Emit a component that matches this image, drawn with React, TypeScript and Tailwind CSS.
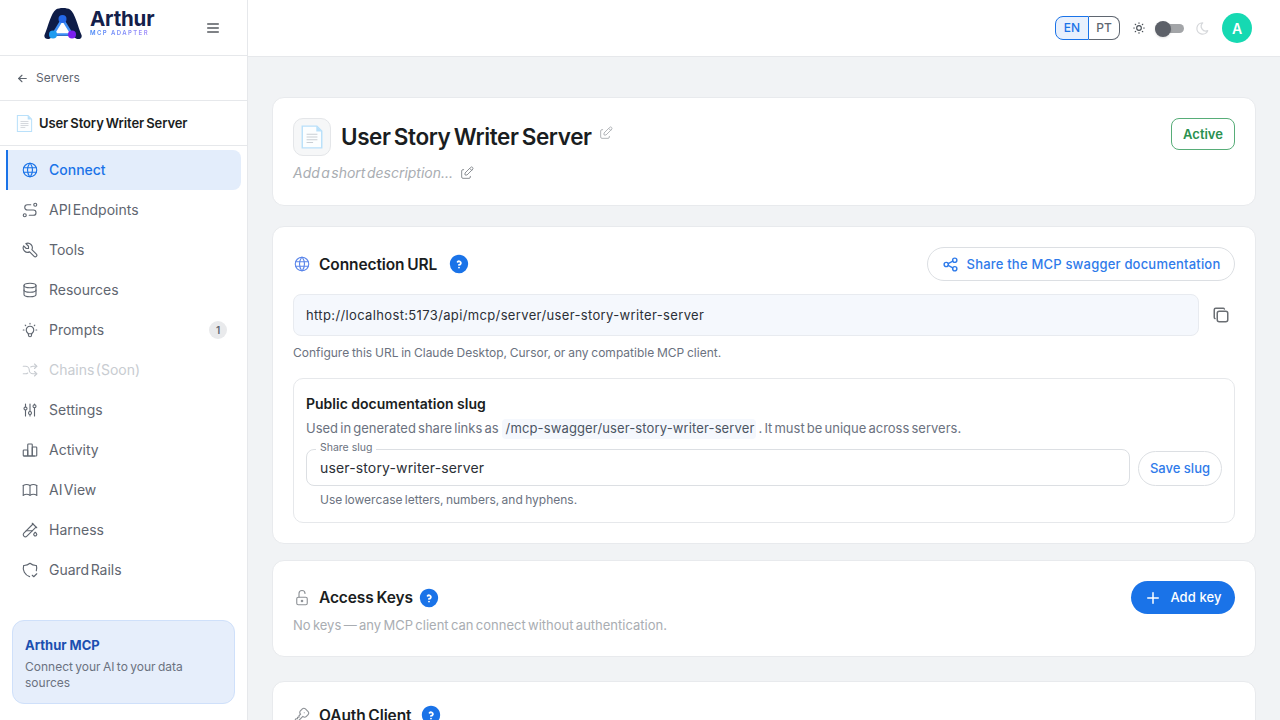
import React from 'react';
import {
  TbAdjustments,
  TbArrowLeft,
  TbArrowsShuffle,
  TbBook,
  TbBulb,
  TbChartBar,
  TbCopy,
  TbDatabase,
  TbEdit,
  TbHelpCircleFilled,
  TbKey,
  TbLockOpen,
  TbMenu2,
  TbMoon,
  TbPlus,
  TbRoute,
  TbShare,
  TbShieldCheck,
  TbSun,
  TbTestPipe,
  TbTool,
  TbWorld,
} from 'react-icons/tb';

const navItems = [
  { label: 'Connect', icon: TbWorld, active: true },
  { label: 'API Endpoints', icon: TbRoute },
  { label: 'Tools', icon: TbTool },
  { label: 'Resources', icon: TbDatabase },
  { label: 'Prompts', icon: TbBulb, badge: '1' },
  { label: 'Chains (Soon)', icon: TbArrowsShuffle, disabled: true },
  { label: 'Settings', icon: TbAdjustments },
  { label: 'Activity', icon: TbChartBar },
  { label: 'AI View', icon: TbBook },
  { label: 'Harness', icon: TbTestPipe },
  { label: 'Guard Rails', icon: TbShieldCheck },
];

function Logo() {
  return (
    <svg width="38" height="34" viewBox="0 0 38 34" className="mb-[7px]">
      <path d="M0.500 28C4 20 7 6 12 2.500c3-2 11-2 14 0C31 6 34 20 37.500 28c1.200 3.500-3 5-5.500 3.500L28 29H10l-4 2.500C3.500 33-.500 31.500.500 28z" fill="#0e1c47" />
      <path d="M18.500 12 9 27.500h19z" fill="#ffffff" stroke="#3f8ff5" strokeWidth="2.400" strokeLinejoin="round" />
      <circle cx="18.500" cy="12" r="4" fill="#2468e8" />
      <circle cx="9" cy="27.500" r="4" fill="#1d9bf0" />
      <circle cx="28" cy="27.500" r="4" fill="#7a1ff0" />
    </svg>
  );
}

function DocIcon({ size }: { size: number }) {
  return (
    <svg width={size} height={size} viewBox="0 0 24 24">
      <path d="M3 2h13.500L21 6.500V22H3z" fill="#fcfeff" stroke="#b9e0fa" strokeWidth="1.300" />
      <path d="M16 2v5h5z" fill="#b9e0fa" />
      <path d="M7 9.500h10M7 12h10M7 14.500h10M7 17h6" stroke="#c9ced4" strokeWidth="1" />
    </svg>
  );
}

function Help() {
  return <TbHelpCircleFilled size={22} className="text-[#1a73e8]" />;
}

function Sidebar() {
  return (
    <aside className="flex w-[248px] shrink-0 flex-col border-r border-[#e6e8eb] bg-white">
      <div className="flex h-[56px] shrink-0 items-center border-b border-[#e6e8eb] pl-[44px] pr-[26px]">
        <Logo />
        <div className="mb-[10px] ml-[8px] flex flex-col">
          <span className="text-[20.500px] leading-[20px] font-bold tracking-[-0.2px] text-[#14204a]">Arthur</span>
          <span className="bg-gradient-to-r from-[#3b82f6] to-[#a78bfa] bg-clip-text text-[6px] leading-[8px] font-semibold tracking-[1.400px] text-transparent">
            MCP ADAPTER
          </span>
        </div>
        <TbMenu2 size={16} className="ml-auto text-[#55595f]" />
      </div>
      <div className="flex h-[45px] shrink-0 items-center gap-[7px] border-b border-[#e6e8eb] pl-[16px] text-[12px] text-[#5f6670]">
        <TbArrowLeft size={13} />
        <span>Servers</span>
      </div>
      <div className="flex h-[45px] shrink-0 items-center gap-[5px] border-b border-[#e6e8eb] pl-[15px] text-[13px] font-semibold tracking-[-0.1px] text-[#1a1d21] [word-spacing:-1px]">
        <DocIcon size={19} />
        <span className="pt-[1px]">User Story Writer Server</span>
      </div>
      <nav className="flex flex-col pt-[4px] pr-[6px] pl-[6px]">
        {navItems.map((item) => {
          const Icon = item.icon;
          return (
            <div
              key={item.label}
              className={
                item.active
                  ? 'flex h-[40px] items-center gap-[10px] rounded-r-[8px] border-l-2 border-[#1a73e8] bg-[#e3edfb] pl-[13px] text-[14px] font-medium text-[#1a73e8]'
                  : item.disabled
                    ? 'flex h-[40px] items-center gap-[10px] pl-[15px] text-[14px] text-[#c8ccd1] [word-spacing:-2.500px]'
                    : 'flex h-[40px] items-center gap-[10px] pl-[15px] text-[14px] text-[#5f6670] [word-spacing:-2.500px]'
              }
            >
              <Icon size={18} strokeWidth={1.5} className="shrink-0" />
              <span className="mb-[2px]">{item.label}</span>
              {item.badge && (
                <span className="mr-[14px] ml-auto flex h-[18px] w-[18px] items-center justify-center rounded-full bg-[#e9eaec] text-[10px] font-semibold text-[#5f6670]">
                  {item.badge}
                </span>
              )}
            </div>
          );
        })}
      </nav>
      <div className="mx-[12px] mt-auto mb-[16px] h-[84px] rounded-[12px] border border-[#cfe0fa] bg-[#e6eefb] px-[12px] pt-[15px]">
        <div className="text-[13px] leading-[18px] font-bold text-[#1b4fb0]">Arthur MCP</div>
        <div className="mt-[5px] text-[12px] leading-[16px] text-[#6b7280] [word-spacing:-1px]">Connect your AI to your data sources</div>
      </div>
    </aside>
  );
}

function Header() {
  return (
    <header className="flex h-[57px] shrink-0 items-center justify-end border-b border-[#e6e8eb] bg-white pr-[28px]">
      <div className="flex h-[24px] text-[12px] font-medium">
        <span className="flex w-[34px] items-center justify-center rounded-l-[8px] border border-[#1a73e8] bg-[#e8f0fd] text-[#1a73e8]">EN</span>
        <span className="flex w-[31px] items-center justify-center rounded-r-[8px] border border-l-0 border-[#5f6670] text-[#5f6670]">PT</span>
      </div>
      <TbSun size={14} className="ml-[12px] text-[#4b5158]" />
      <div className="relative ml-[9px] h-[9px] w-[29px] rounded-full bg-[#a3a5a8]">
        <span className="absolute top-[-3px] left-0 h-[16px] w-[16px] rounded-full bg-[#5c6068] shadow-sm" />
      </div>
      <TbMoon size={15} className="ml-[11px] text-[#d6d8db]" />
      <div className="ml-[12px] flex h-[30px] w-[30px] items-center justify-center rounded-full bg-[#16d9b2] text-[14px] font-semibold text-white">A</div>
    </header>
  );
}

function Card({ className, children }: { className: string; children: React.ReactNode }) {
  return <section className={`shrink-0 rounded-[12px] border border-[#e8eaed] bg-white ${className}`}>{children}</section>;
}

export default function App() {
  return (
    <div className="flex h-screen overflow-hidden bg-[#f1f3f5] font-['Inter',sans-serif]">
      <Sidebar />
      <div className="flex min-w-0 flex-1 flex-col">
        <Header />
        <main className="flex flex-1 flex-col overflow-hidden pt-[40px] pr-[24px] pl-[24px]">
          <Card className="flex h-[109px] items-start justify-between px-[20px] pt-[20px]">
            <div>
              <div className="flex items-center gap-[10px]">
                <div className="flex h-[38px] w-[38px] items-center justify-center rounded-[10px] border border-[#e4e6e9] bg-[#f6f7f8]">
                  <DocIcon size={26} />
                </div>
                <h1 className="text-[22.500px] leading-[38px] font-semibold tracking-[-0.4px] text-[#1a1d21] [word-spacing:-2px]">User Story Writer Server</h1>
                <TbEdit size={16} strokeWidth={1.5} className="mb-[8px] -ml-[4px] text-[#b3b6ba]" />
              </div>
              <div className="mt-[6px] flex items-center gap-[6px] text-[14px] leading-[22px] text-[#a9adb2] italic [word-spacing:-2.500px]">
                <span>Add a short description...</span>
                <TbEdit size={16} strokeWidth={1.5} className="text-[#8d9196]" />
              </div>
            </div>
            <span className="flex h-[32px] w-[64px] items-center justify-center rounded-[8px] border border-[#57ad78] pt-[1px] text-[13px] font-semibold text-[#2a9150]">Active</span>
          </Card>

          <Card className="mt-[20px] h-[318px] px-[20px] pt-[20px]">
            <div className="flex h-[34px] items-center">
              <TbWorld size={18} strokeWidth={1.5} className="text-[#5b86ea]" />
              <h2 className="ml-[8px] pt-[1px] text-[15.500px] font-semibold tracking-[-0.1px] text-[#1a1d21] [word-spacing:-1px]">Connection URL</h2>
              <span className="ml-[11px]"><Help /></span>
              <button className="ml-auto flex h-[34px] w-[308px] items-center justify-center gap-[8px] rounded-full border border-[#dcdfe3] text-[13px] font-medium tracking-[0.2px] text-[#2f7bea]">
                <TbShare size={17} />
                <span className="pt-[1px]">Share the MCP swagger documentation</span>
              </button>
            </div>
            <div className="mt-[13px] flex items-center">
              <div className="flex h-[42px] flex-1 items-center rounded-[8px] border border-[#e8ebf0] bg-[#f5f8fd] px-[12px] pt-[1px] text-[13px] tracking-[0.36px] text-[#2b2f36]">
                http://localhost:5173/api/mcp/server/user-story-writer-server
              </div>
              <span className="flex w-[36px] justify-end pr-[5px] text-[#6a6e73]"><TbCopy size={18} /></span>
            </div>
            <p className="mt-[9px] text-[12px] leading-[16px] text-[#6b7280] [word-spacing:-0.600px]">Configure this URL in Claude Desktop, Cursor, or any compatible MCP client.</p>
            <div className="mt-[17px] h-[145px] rounded-[10px] border border-[#e6e8eb] px-[12px] pt-[15px]">
              <h3 className="text-[14px] leading-[20px] font-semibold text-[#1a1d21]">Public documentation slug</h3>
              <p className="mt-[5px] flex h-[20px] items-center text-[13px] text-[#6b7280] [word-spacing:-1.500px]">
                <span>Used in generated share links as</span>
                <code className="mr-[2px] ml-[3px] rounded-[4px] bg-[#f5f8fd] pr-[2px] pl-[4px] font-['Inter',sans-serif] text-[13px] tracking-[0.13px] text-[#4b5563] [word-spacing:0px]">/mcp-swagger/user-story-writer-server</code>
                <span>. It must be unique across servers.</span>
              </p>
              <div className="mt-[10px] flex items-end gap-[8px]">
                <div className="relative flex h-[37px] flex-1 items-center rounded-[8px] border border-[#dcdfe3] px-[13px] text-[14px] tracking-[0.15px] text-[#2b2f36]">
                  user-story-writer-server
                  <span className="absolute top-[-8px] left-[9px] bg-white px-[4px] text-[10.500px] leading-[12px] tracking-normal text-[#6b7280]">Share slug</span>
                </div>
                <button className="h-[35px] w-[84px] rounded-full border border-[#dcdfe3] text-[13px] font-medium text-[#2f7bea]">Save slug</button>
              </div>
              <p className="mt-[6px] pl-[14px] text-[12px] leading-[16px] text-[#6b7280] [word-spacing:-1px]">Use lowercase letters, numbers, and hyphens.</p>
            </div>
          </Card>

          <Card className="mt-[16px] h-[97px] px-[20px] pt-[20px]">
            <div className="flex h-[33px] items-center">
              <TbLockOpen size={18} strokeWidth={1.5} className="text-[#8d9196]" />
              <h2 className="ml-[8px] pt-[1px] text-[15.500px] font-semibold tracking-[-0.1px] text-[#1a1d21] [word-spacing:-1px]">Access Keys</h2>
              <span className="ml-[5px]"><Help /></span>
              <button className="ml-auto flex h-[33px] w-[104px] items-center justify-center gap-[8px] rounded-full bg-[#1a73e8] text-[13px] font-medium tracking-[0.1px] text-white">
                <TbPlus size={18} strokeWidth={2} />
                <span>Add key</span>
              </button>
            </div>
            <p className="mt-[1px] text-[13px] leading-[20px] text-[#a9adb2] [word-spacing:-1.300px]">No keys — any MCP client can connect without authentication.</p>
          </Card>

          <Card className="mt-[24px] h-[120px] px-[20px] pt-[20px]">
            <div className="flex h-[26px] items-center">
              <TbKey size={18} strokeWidth={1.5} className="text-[#8d9196]" />
              <h2 className="ml-[8px] pt-[1px] text-[15.500px] font-semibold tracking-[-0.1px] text-[#1a1d21] [word-spacing:-1px]">OAuth Client</h2>
              <span className="ml-[9px]"><Help /></span>
            </div>
          </Card>
        </main>
      </div>
    </div>
  );
}
